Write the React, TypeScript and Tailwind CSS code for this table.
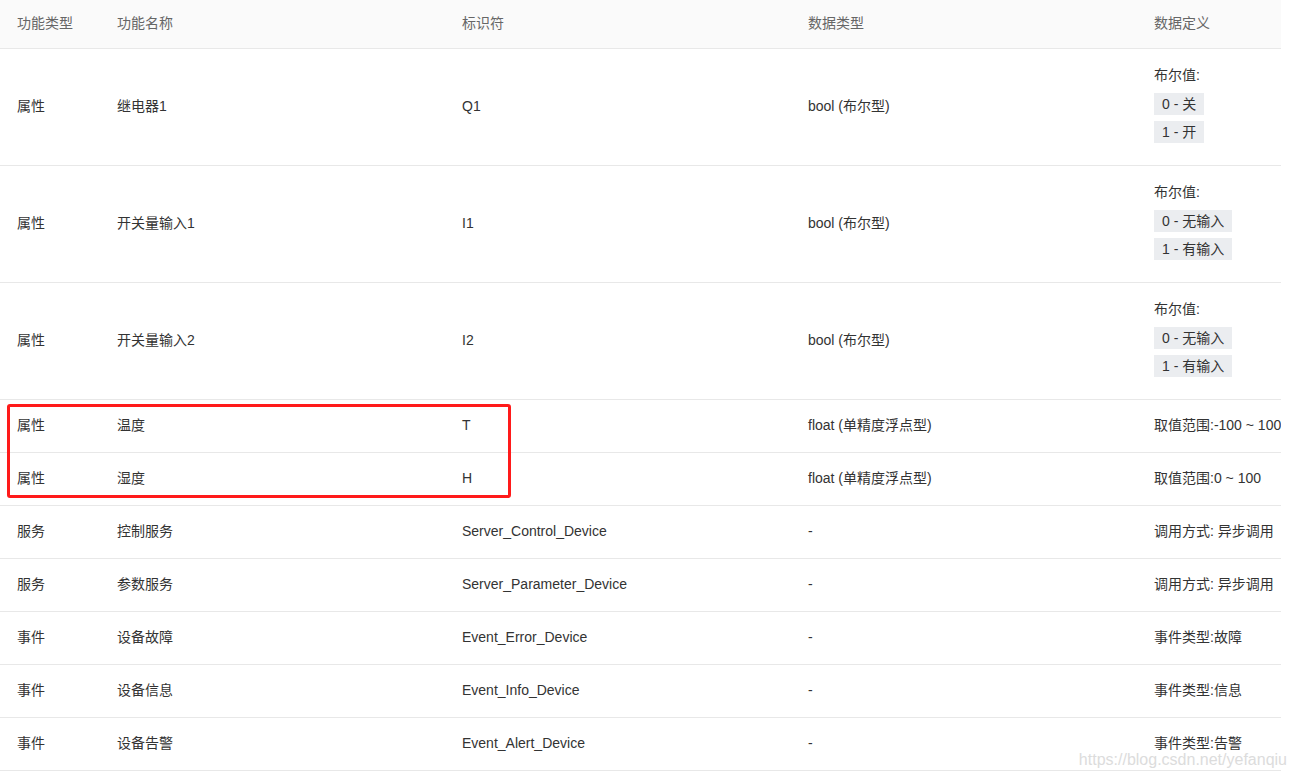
import React from "react";

type Row = {
  type: string;
  name: string;
  id: string;
  dtype: string;
  def: React.ReactNode;
  tall?: boolean;
};

const Tag = ({ children }: { children: React.ReactNode }) => (
  <div className="inline-block self-start h-[22px] leading-[22px] px-2 bg-[#ebedf0] text-[#333] mb-[6px]">
    {children}
  </div>
);

const BoolDef = ({ a, b }: { a: string; b: string }) => (
  <div className="flex flex-col">
    <div className="leading-5 mb-2">布尔值:</div>
    <Tag>{a}</Tag>
    <Tag>{b}</Tag>
  </div>
);

const rows: Row[] = [
  { type: "属性", name: "继电器1", id: "Q1", dtype: "bool (布尔型)", def: <BoolDef a="0 - 关" b="1 - 开" />, tall: true },
  { type: "属性", name: "开关量输入1", id: "I1", dtype: "bool (布尔型)", def: <BoolDef a="0 - 无输入" b="1 - 有输入" />, tall: true },
  { type: "属性", name: "开关量输入2", id: "I2", dtype: "bool (布尔型)", def: <BoolDef a="0 - 无输入" b="1 - 有输入" />, tall: true },
  { type: "属性", name: "温度", id: "T", dtype: "float (单精度浮点型)", def: "取值范围:-100 ~ 100" },
  { type: "属性", name: "湿度", id: "H", dtype: "float (单精度浮点型)", def: "取值范围:0 ~ 100" },
  { type: "服务", name: "控制服务", id: "Server_Control_Device", dtype: "-", def: "调用方式: 异步调用" },
  { type: "服务", name: "参数服务", id: "Server_Parameter_Device", dtype: "-", def: "调用方式: 异步调用" },
  { type: "事件", name: "设备故障", id: "Event_Error_Device", dtype: "-", def: "事件类型:故障" },
  { type: "事件", name: "设备信息", id: "Event_Info_Device", dtype: "-", def: "事件类型:信息" },
  { type: "事件", name: "设备告警", id: "Event_Alert_Device", dtype: "-", def: "事件类型:告警" },
];

const grid = "grid grid-cols-[100px_345px_346px_346px_144px]";

export default function App() {
  return (
    <div
      className="relative w-[1294px] h-[777px] bg-white overflow-hidden text-[14px] text-[#333]"
      style={{ fontFamily: '"Liberation Sans", Arial, "Noto Sans CJK SC", sans-serif' }}
    >
      <div className="w-[1281px] overflow-hidden">
        <div className={`${grid} h-[49px] pb-[2px] bg-[#fafafa] border-b border-[#e8e8e8] text-[#666] items-center`}>
          <div className="pl-[17px] whitespace-nowrap">功能类型</div>
          <div className="pl-[17px] whitespace-nowrap">功能名称</div>
          <div className="pl-[17px] whitespace-nowrap">标识符</div>
          <div className="pl-[17px] whitespace-nowrap">数据类型</div>
          <div className="pl-[17px] whitespace-nowrap">数据定义</div>
        </div>
        {rows.map((r, i) => (
          <div
            key={i}
            className={`${grid} ${r.tall ? "h-[117px]" : "h-[53px]"} pb-[2px] border-b border-[#e8e8e8] items-center leading-5`}
          >
            <div className="pl-[17px] whitespace-nowrap">{r.type}</div>
            <div className="pl-[17px] whitespace-nowrap">{r.name}</div>
            <div className="pl-[17px] whitespace-nowrap">{r.id}</div>
            <div className="pl-[17px] whitespace-nowrap">{r.dtype}</div>
            <div className={`pl-[17px] whitespace-nowrap ${r.tall ? "pt-[2px]" : ""}`}>{r.def}</div>
          </div>
        ))}
      </div>
      <div className="absolute left-[7px] top-[404px] w-[504px] h-[94px] border-[3px] border-[#ff1a1a] rounded-[3px]" />
      <div className="absolute right-[7px] top-[750px] text-[16px] text-[#dcdcdc] leading-5">
        https://blog.csdn.net/yefanqiu
      </div>
    </div>
  );
}
